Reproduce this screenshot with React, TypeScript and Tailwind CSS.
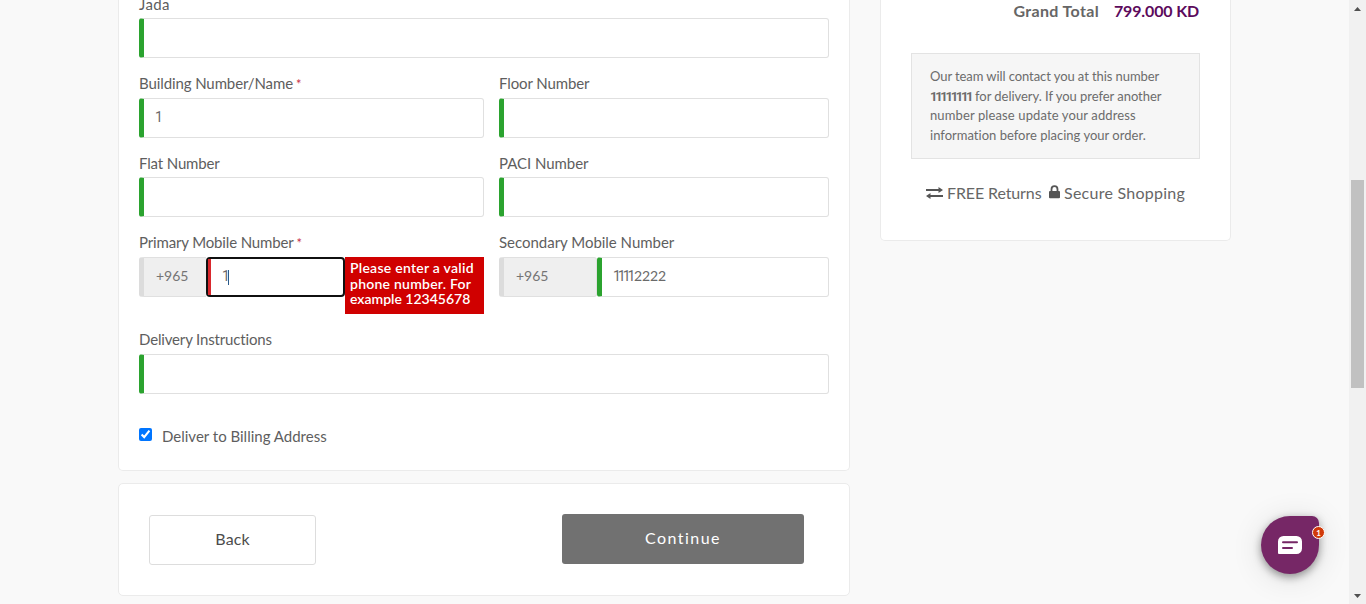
import type { ReactNode } from 'react';

function Label({ children, className }: { children: ReactNode; className: string }) {
  return (
    <div className={`flex items-end text-[15px] leading-5 text-[#5e5e5e] whitespace-nowrap ${className}`}>
      <span>{children}</span>
    </div>
  );
}

function Required() {
  return <span className="ml-[3px] text-[13px] leading-none text-[#c8324a]">*</span>;
}

function Field({ value = '', className = '' }: { value?: string; className?: string }) {
  return (
    <input
      type="text"
      defaultValue={value}
      className={`block h-10 rounded-[3px] border border-l-[5px] border-[#e0e0e0] border-l-[#2ba32f] bg-white pb-[3px] text-sm text-[#6a6a6a] outline-none ${className}`}
    />
  );
}

function Prefix({ className }: { className: string }) {
  return (
    <div className={`flex h-10 items-center rounded-[3px] border border-l-[5px] border-[#e0e0e0] border-l-[#dcdcdc] bg-[#efefef] pl-3 pb-[2px] text-sm text-[#757575] ${className}`}>
      +965
    </div>
  );
}

function AddressForm() {
  return (
    <section className="h-[471px] shrink-0 overflow-hidden rounded-b-[5px] border border-t-0 border-[#ebebeb] bg-white px-5">
      <Label className="h-[18px] pb-[4px] tracking-[0.4px]">Jada</Label>
      <Field className="w-full" />
      <div className="flex gap-[15px]">
        <div className="w-[345px]">
          <Label className="h-10 pb-[5px] tracking-[-0.1px]">
            Building Number/Name<Required />
          </Label>
          <Field value="1" className="w-full pl-[11px] font-['Roboto',sans-serif]" />
          <Label className="h-[39px] pb-[4px] tracking-[-0.15px]">Flat Number</Label>
          <Field className="w-full" />
          <Label className="h-10 pb-[5px] tracking-[-0.15px]">
            Primary Mobile Number<Required />
          </Label>
          <div className="flex h-[57px] items-start">
            <Prefix className="w-[67px] rounded-r-none border-r-0" />
            <div className="flex h-10 w-[139px] items-center rounded-[4px] border-2 border-[#101010]">
              <div className="h-full w-[3px] bg-[#d9282d]" />
              <span className="ml-[11px] pb-[2px] font-['Roboto',sans-serif] text-sm tracking-[-2px] text-[#6a6a6a]">1</span>
              <span className="h-[15px] w-px bg-[#2a5a8a]" />
            </div>
            <div className="h-[57px] w-[139px] bg-[#d00000] pt-[3px] pl-[5px] text-[14px] leading-[15.6px] font-semibold whitespace-nowrap text-white">
              <div className="tracking-[0.26px]">Please enter a valid</div>
              <div className="tracking-[0.24px]">phone number. For</div>
              <div>example 12345678</div>
            </div>
          </div>
        </div>
        <div className="w-[330px]">
          <Label className="h-10 pb-[5px] tracking-[-0.1px]">Floor Number</Label>
          <Field className="w-full" />
          <Label className="h-[39px] pb-[4px] tracking-[-0.05px]">PACI Number</Label>
          <Field className="w-full" />
          <Label className="h-10 pb-[5px] tracking-[-0.02px]">Secondary Mobile Number</Label>
          <div className="flex">
            <Prefix className="w-[98px]" />
            <div className="flex h-10 w-[232px] items-center rounded-[3px] border border-l-[5px] border-[#e0e0e0] border-l-[#2ba32f] pb-[2px] pl-[11px] text-sm text-[#6a6a6a]">
              <span className="w-[21px] font-['Roboto',sans-serif] tracking-[-3px]">1111</span>
              <span className="tracking-[-0.15px]">2222</span>
            </div>
          </div>
        </div>
      </div>
      <Label className="h-10 pb-[5px] tracking-[-0.16px]">Delivery Instructions</Label>
      <Field className="w-full" />
      <label className="mt-[32px] flex h-5 items-center text-[15px] text-[#5e5e5e]">
        <input type="checkbox" defaultChecked className="mb-[3px] size-[13px]" />
        <span className="ml-[10px]">Deliver to Billing Address</span>
      </label>
    </section>
  );
}

function Actions() {
  return (
    <section className="mt-3 flex h-[113px] shrink-0 items-start justify-between rounded-[5px] border border-[#ebebeb] bg-white pr-[45px] pl-[30px]">
      <button className="mt-[31px] h-[50px] w-[167px] rounded-[3px] border border-[#ddd] pb-[2px] text-base tracking-[0.1px] text-[#4c4c4c]">Back</button>
      <button className="mt-[30px] h-[50px] w-[242px] rounded-[3px] bg-[#717171] pb-[2px] text-base tracking-[1.45px] text-white">Continue</button>
    </section>
  );
}

function Summary() {
  return (
    <aside className="flex h-[241px] w-[351px] flex-col rounded-b-[5px] border border-t-0 border-[#ebebeb] bg-white px-[30px]">
      <div className="flex h-[53px] justify-end gap-[15px] pr-px text-base leading-[22px] font-bold whitespace-nowrap">
        <span className="tracking-[0.35px] text-[#666]">Grand Total</span>
        <span className="tracking-[-0.15px] text-[#5c0a5c]">799.000 KD</span>
      </div>
      <div className="h-[106px] border border-[#e3e3e3] bg-[#f6f6f6] pt-[13px] pl-[18px] text-[13px] leading-[19.5px] whitespace-nowrap text-[#6c6c6c]">
        <div className="tracking-[-0.08px]">Our team will contact you at this number</div>
        <div className="flex">
          <b className="w-[45px] font-['Roboto',sans-serif] tracking-[-2.3px]">11111111</b>
          <span className="tracking-[-0.04px]">for delivery. If you prefer another</span>
        </div>
        <div className="tracking-[0.12px]">number please update your address</div>
        <div className="tracking-[0.01px]">information before placing your order.</div>
      </div>
      <div className="mt-[22px] flex h-6 items-center pl-[15px] text-base whitespace-nowrap text-[#666]">
        <svg width="17" height="12" viewBox="0 0 17 12" className="shrink-0" fill="#555">
          <path d="M0 2H12.5V0L17 3L12.5 6V4H0ZM17 8H4.5V6L0 9L4.5 12V10H17Z" />
        </svg>
        <span className="ml-1 w-[94px] pb-px tracking-[-0.12px]">FREE Returns</span>
        <svg width="11" height="14" viewBox="0 0 11 14" className="mb-[2px] ml-2 shrink-0" fill="#555">
          <path fillRule="evenodd" d="M1.6 6V4.2a3.9 3.9 0 0 1 7.8 0V6H10a1 1 0 0 1 1 1v5.2a1 1 0 0 1-1 1H1a1 1 0 0 1-1-1V7a1 1 0 0 1 1-1ZM3.4 6h4.2V4.2a2.1 2.1 0 0 0-4.2 0Z" />
        </svg>
        <span className="ml-1 pb-px tracking-[0.25px]">Secure Shopping</span>
      </div>
    </aside>
  );
}

function ChatButton() {
  return (
    <div className="absolute top-[516px] left-[1261px] size-[58px] rounded-[29px] rounded-tr-[7px] bg-[#762766] shadow-[0_3px_8px_rgba(0,0,0,0.4),0_4px_32px_rgba(0,0,0,0.12)]">
      <svg width="24" height="18" viewBox="0 0 24 18" className="absolute top-5 left-[17px]">
        <path d="M5.5 0H18.5A5.5 5.5 0 0 1 24 5.5V12.5A5.5 5.5 0 0 1 18.5 18H1A1 1 0 0 1 0 17V5.5A5.5 5.5 0 0 1 5.5 0Z" fill="#fff" />
        <path d="M5 6.2H19M5 11.9H14" stroke="#762766" strokeWidth="2" strokeLinecap="round" />
      </svg>
      <span className="absolute top-[10px] left-[51px] flex size-[13px] items-center justify-center rounded-full border border-white bg-[#d13a0a] text-[8px] leading-none font-bold text-white">1</span>
    </div>
  );
}

function Scrollbar() {
  return (
    <div className="flex h-full w-[17px] flex-col items-center justify-between bg-[#f1f1f1]">
      <svg width="17" height="17" viewBox="0 0 17 17"><path d="M5 11L8.5 7L12 11Z" fill="#505050" /></svg>
      <div className="mt-[163px] mb-auto h-[208px] w-[13px] bg-[#c1c1c1]" />
      <svg width="17" height="17" viewBox="0 0 17 17"><path d="M5 7L8.5 11L12 7Z" fill="#505050" /></svg>
    </div>
  );
}

export default function App() {
  return (
    <div className="relative flex h-[604px] w-[1366px] overflow-hidden bg-[#f9f9f9] font-['Lato',sans-serif]">
      <main className="flex w-[1349px] items-start gap-[30px] pl-[118px]">
        <div className="flex w-[732px] flex-col">
          <AddressForm />
          <Actions />
        </div>
        <Summary />
      </main>
      <Scrollbar />
      <ChatButton />
    </div>
  );
}
